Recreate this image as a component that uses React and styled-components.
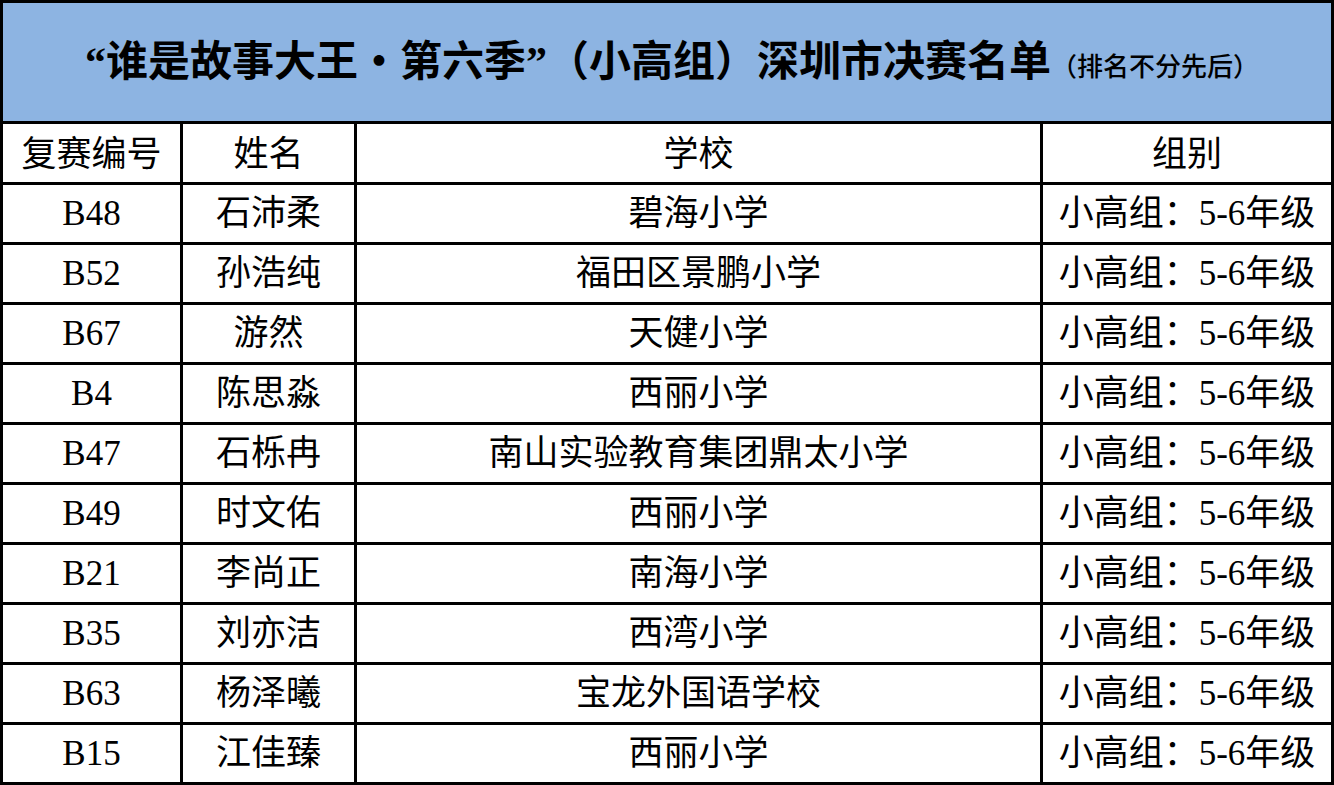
import React from "react";
import styled, { createGlobalStyle } from "styled-components";

const GlobalStyle = createGlobalStyle`
  html, body {
    margin: 0;
    padding: 0;
    background: #ffffff;
    overflow: hidden;
  }
  body {
    font-family: "Liberation Serif", "Noto Sans CJK SC", serif;
    text-spacing-trim: space-all;
  }
`;

const Sheet = styled.div`
  width: 1334px;
  height: 785px;
  box-sizing: border-box;
  display: grid;
  grid-template-columns: 177px 171px 683px 288px;
  grid-template-rows: 118px 58px repeat(10, 57px);
  gap: 3px;
  padding: 3px;
  background: #000000;
  font-family: "Liberation Serif", "Noto Sans CJK SC", serif;
  color: #000000;
  text-spacing-trim: space-all;
`;

const TitleCell = styled.div`
  grid-column: 1 / -1;
  background: #8db4e2;
  display: flex;
  align-items: baseline;
  justify-content: center;
  padding-top: 38px;
  padding-left: 10px;
  box-sizing: border-box;
  white-space: nowrap;
`;

const TitleMain = styled.span`
  font-size: 42px;
  font-weight: 700;
  line-height: 1;
`;

const TitleNote = styled.span`
  font-size: 26px;
  font-weight: 500;
  line-height: 1;
`;

const Cell = styled.div`
  background: #ffffff;
  display: flex;
  align-items: center;
  justify-content: center;
  font-size: 35px;
  line-height: 1;
  white-space: nowrap;
  padding-top: ${(p) => (p.$header ? "2px" : "0")};
  box-sizing: border-box;
`;

const rows = [
  ["B48", "石沛柔", "碧海小学"],
  ["B52", "孙浩纯", "福田区景鹏小学"],
  ["B67", "游然", "天健小学"],
  ["B4", "陈思淼", "西丽小学"],
  ["B47", "石栎冉", "南山实验教育集团鼎太小学"],
  ["B49", "时文佑", "西丽小学"],
  ["B21", "李尚正", "南海小学"],
  ["B35", "刘亦洁", "西湾小学"],
  ["B63", "杨泽曦", "宝龙外国语学校"],
  ["B15", "江佳臻", "西丽小学"],
];

export default function App() {
  return (
    <>
      <GlobalStyle />
      <Sheet lang="zh-CN">
        <TitleCell>
          <TitleMain>“谁是故事大王・第六季”（小高组）深圳市决赛名单</TitleMain>
          <TitleNote>（排名不分先后）</TitleNote>
        </TitleCell>
        <Cell $header>复赛编号</Cell>
        <Cell $header>姓名</Cell>
        <Cell $header>学校</Cell>
        <Cell $header>组别</Cell>
        {rows.map(([id, name, school]) => (
          <React.Fragment key={id}>
            <Cell>{id}</Cell>
            <Cell>{name}</Cell>
            <Cell>{school}</Cell>
            <Cell>小高组：5-6年级</Cell>
          </React.Fragment>
        ))}
      </Sheet>
    </>
  );
}
